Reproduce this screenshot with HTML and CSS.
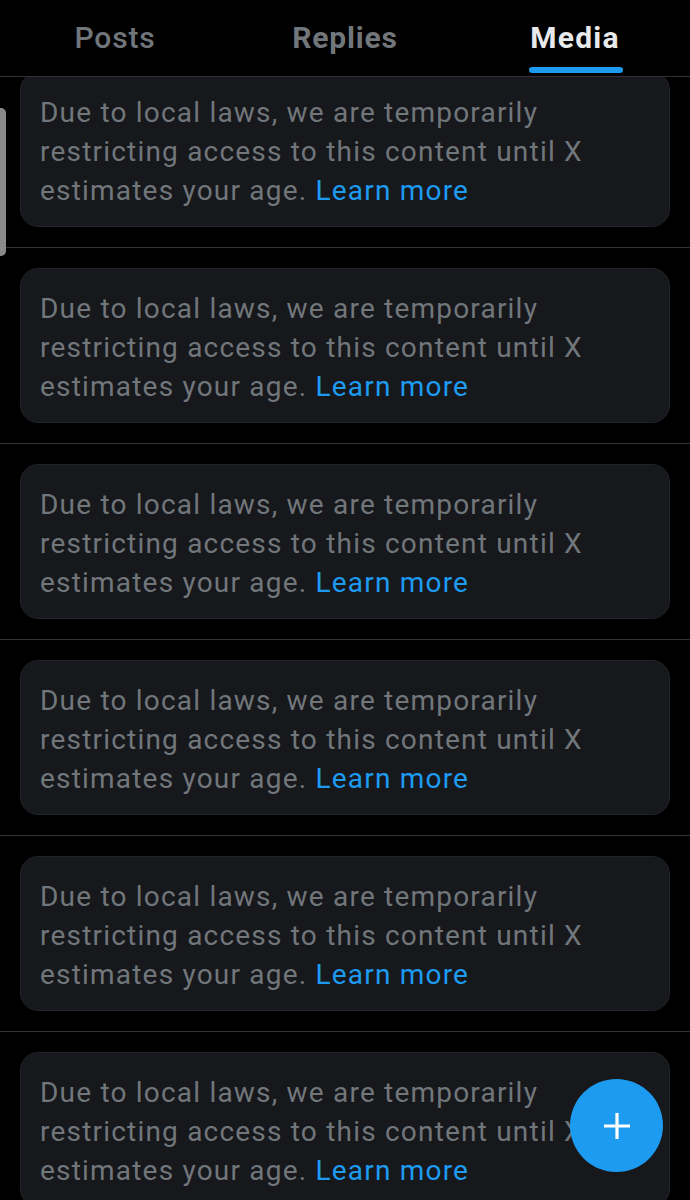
FILE: index.html
```html
<!DOCTYPE html>
<html>
<head>
<meta charset="utf-8">
<link rel="stylesheet" href="styles.css">
</head>
<body>
<div class="screen">
  <header class="tabs">
    <div class="tab">Posts</div>
    <div class="tab bold">Replies</div>
    <div class="tab active">Media<span class="underline"></span></div>
  </header>
  <main class="list">
    <div class="item"><div class="card">Due to local laws, we are temporarily restricting access to this content until X estimates your age. <a class="link">Learn more</a></div></div>
    <div class="item"><div class="card">Due to local laws, we are temporarily restricting access to this content until X estimates your age. <a class="link">Learn more</a></div></div>
    <div class="item"><div class="card">Due to local laws, we are temporarily restricting access to this content until X estimates your age. <a class="link">Learn more</a></div></div>
    <div class="item"><div class="card">Due to local laws, we are temporarily restricting access to this content until X estimates your age. <a class="link">Learn more</a></div></div>
    <div class="item"><div class="card">Due to local laws, we are temporarily restricting access to this content until X estimates your age. <a class="link">Learn more</a></div></div>
    <div class="item"><div class="card">Due to local laws, we are temporarily restricting access to this content until X estimates your age. <a class="link">Learn more</a></div></div>
  </main>
  <div class="scrollbar"></div>
  <button class="fab" aria-label="New post">
    <svg width="32" height="32" viewBox="0 0 32 32"><path d="M16 3v26M3 16h26" stroke="#fff" stroke-width="3.2" stroke-linecap="butt" fill="none"/></svg>
  </button>
</div>
</body>
</html>
```
FILE: styles.css
```css
* { box-sizing: border-box; }
html, body { margin: 0; padding: 0; background: #000; }
body { font-family: Roboto, "Noto Sans", sans-serif; }
.screen { position: relative; width: 690px; height: 1200px; overflow: hidden; background: #000; }
.tabs {
  position: relative; z-index: 2;
  display: grid; grid-template-columns: 230px 230px 230px;
  height: 77px; background: #000; border-bottom: 1px solid #2f3336;
}
.tab {
  position: relative;
  display: flex; align-items: center; justify-content: center;
  padding-bottom: 2px;
  font-size: 30px; font-weight: 500; color: #71767b; letter-spacing: 0.8px;
}
.tab.bold { font-weight: 700; }
.tab.active { color: #e7e9ea; font-weight: 700; letter-spacing: 1.2px; }
.underline {
  position: absolute; left: 69px; width: 94px; bottom: 3px; height: 6px;
  border-radius: 3px; background: #1d9bf0;
}
.list { margin-top: -25px; position: relative; z-index: 1; }
.item { padding: 20px; border-bottom: 1px solid #2f3336; }
.card {
  background: #16181c; border: 1px solid #202327; border-radius: 18px;
  padding: 20px 19px 16px 19px; height: 155px;
  font-size: 28px; line-height: 39px; color: #71767b; letter-spacing: 1.2px;
}
.link { color: #1d9bf0; text-decoration: none; }
.scrollbar {
  position: absolute; left: -5px; top: 108px; width: 11px; height: 148px;
  border-radius: 5px; background: #8a8a8a; z-index: 3;
}
.fab {
  position: absolute; left: 570px; top: 1079px; width: 93px; height: 93px;
  border-radius: 50%; border: none; background: #1d9bf0; z-index: 4;
  display: flex; align-items: center; justify-content: center; padding: 0;
}
```
